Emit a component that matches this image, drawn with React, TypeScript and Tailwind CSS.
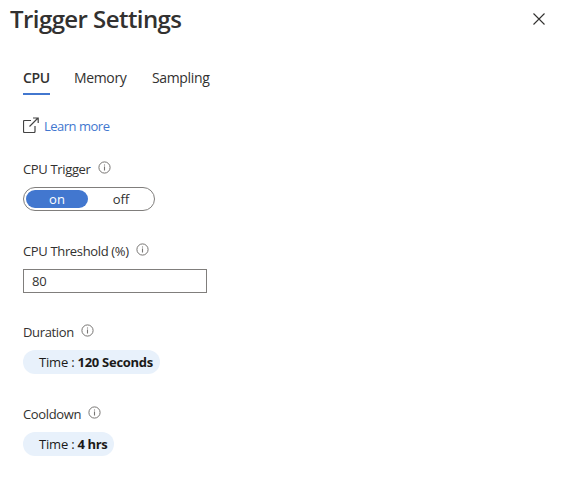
import React, { useState } from "react";

function InfoIcon() {
  return (
    <svg width="13" height="13" viewBox="0 0 13 13" fill="none" className="-mt-[4px] shrink-0">
      <circle cx="6.5" cy="6.5" r="5.6" stroke="#777573" strokeWidth="1" />
      <path d="M6.5 5.5V9.5M6.5 3.5V4.5" stroke="#777573" strokeWidth="1.1" />
    </svg>
  );
}

function Label({ children }: { children: React.ReactNode }) {
  return <div className="flex h-[18px] items-center gap-[7px] leading-[18px] tracking-[-0.35px]">{children}<InfoIcon /></div>;
}

export default function App() {
  const [on, setOn] = useState(true);
  return (
    <main className="h-[490px] w-[566px] overflow-hidden bg-white font-['Open_Sans','Noto_Sans',sans-serif] text-[13px] text-[#323130]">
      <header className="flex h-[38px] items-center justify-between pl-[10px] pr-[20px]">
        <h1 className="-mt-px whitespace-nowrap text-[24px] font-semibold leading-[36px] tracking-[-0.57px]">Trigger Settings</h1>
        <button aria-label="Close" className="flex">
          <svg width="14" height="14" viewBox="0 0 14 14" fill="none">
            <path d="M1.5 1.5L12.5 12.5M12.5 1.5L1.5 12.5" stroke="#323130" strokeWidth="1.1" />
          </svg>
        </button>
      </header>
      <div className="pl-[23px] pt-[29px]">
        <nav className="flex h-[28px] items-start whitespace-nowrap text-[14px] leading-[22px]">
          <button className="mr-[24px] h-[28px] w-[27px] border-b-2 border-[#4277cf] text-left font-semibold tracking-[-0.4px]">
            <span className="block h-[26px]">CPU</span>
          </button>
          <button className="mr-[26px] w-[52px] text-left tracking-[-0.35px]">Memory</button>
          <button className="tracking-[-0.35px]">Sampling</button>
        </nav>
        <a className="mt-[22px] flex h-[18px] items-center gap-[5px] text-[#4277cf]">
          <svg width="16" height="16" viewBox="0 0 16 16" fill="none" className="-mt-[3px]">
            <path d="M8 3.5H1.5Q.5 3.5 .5 4.5V14Q.5 15.5 1.5 15.5H11Q12 15.5 12 14.5V9" stroke="#444" strokeWidth="1.2" />
            <path d="M6.5 9.5L15 1M10 1H15.2V6" stroke="#444" strokeWidth="1.2" />
          </svg>
          <span className="leading-[18px] tracking-[-0.5px]">Learn more</span>
        </a>
        <div className="mt-[25px]"><Label><span>CPU Trigger</span></Label></div>
        <div className="mt-[9px] flex h-[24px] w-[132px] rounded-full border border-[#807e7c] p-[2px] leading-[18px]">
          <button onClick={() => setOn(true)} className={on ? "w-[62px] shrink-0 rounded-full bg-[#4277cf] text-white" : "w-[62px] shrink-0 rounded-full"}>on</button>
          <button onClick={() => setOn(false)} className={on ? "w-[66px] shrink-0 rounded-full" : "w-[66px] shrink-0 rounded-full bg-[#4277cf] text-white"}>off</button>
        </div>
        <div className="mt-[31px]"><Label><span>CPU Threshold (%)</span></Label></div>
        <input defaultValue="80" className="mt-[9px] block h-[24px] w-[184px] border border-[#807e7c] bg-white px-[8px] pb-px text-[13px] tracking-[-0.3px] outline-none" />
        <div className="mt-[30px]"><Label><span>Duration</span></Label></div>
        <div className="mt-[9px] flex h-[24px] w-[137px] items-center whitespace-pre rounded-full bg-[#e8f1fb] pl-[16px] pt-px text-[#1b1a19]">
          <span className="tracking-[-0.2px]">Time : </span><b className="tracking-[-0.28px]">120 Seconds</b>
        </div>
        <div className="mt-[31px]"><Label><span>Cooldown</span></Label></div>
        <div className="mt-[9px] flex h-[24px] w-[91px] items-center whitespace-pre rounded-full bg-[#e8f1fb] pl-[16px] pt-px text-[#1b1a19]">
          <span className="tracking-[-0.2px]">Time : </span><b className="tracking-[-0.4px]">4 hrs</b>
        </div>
      </div>
    </main>
  );
}
